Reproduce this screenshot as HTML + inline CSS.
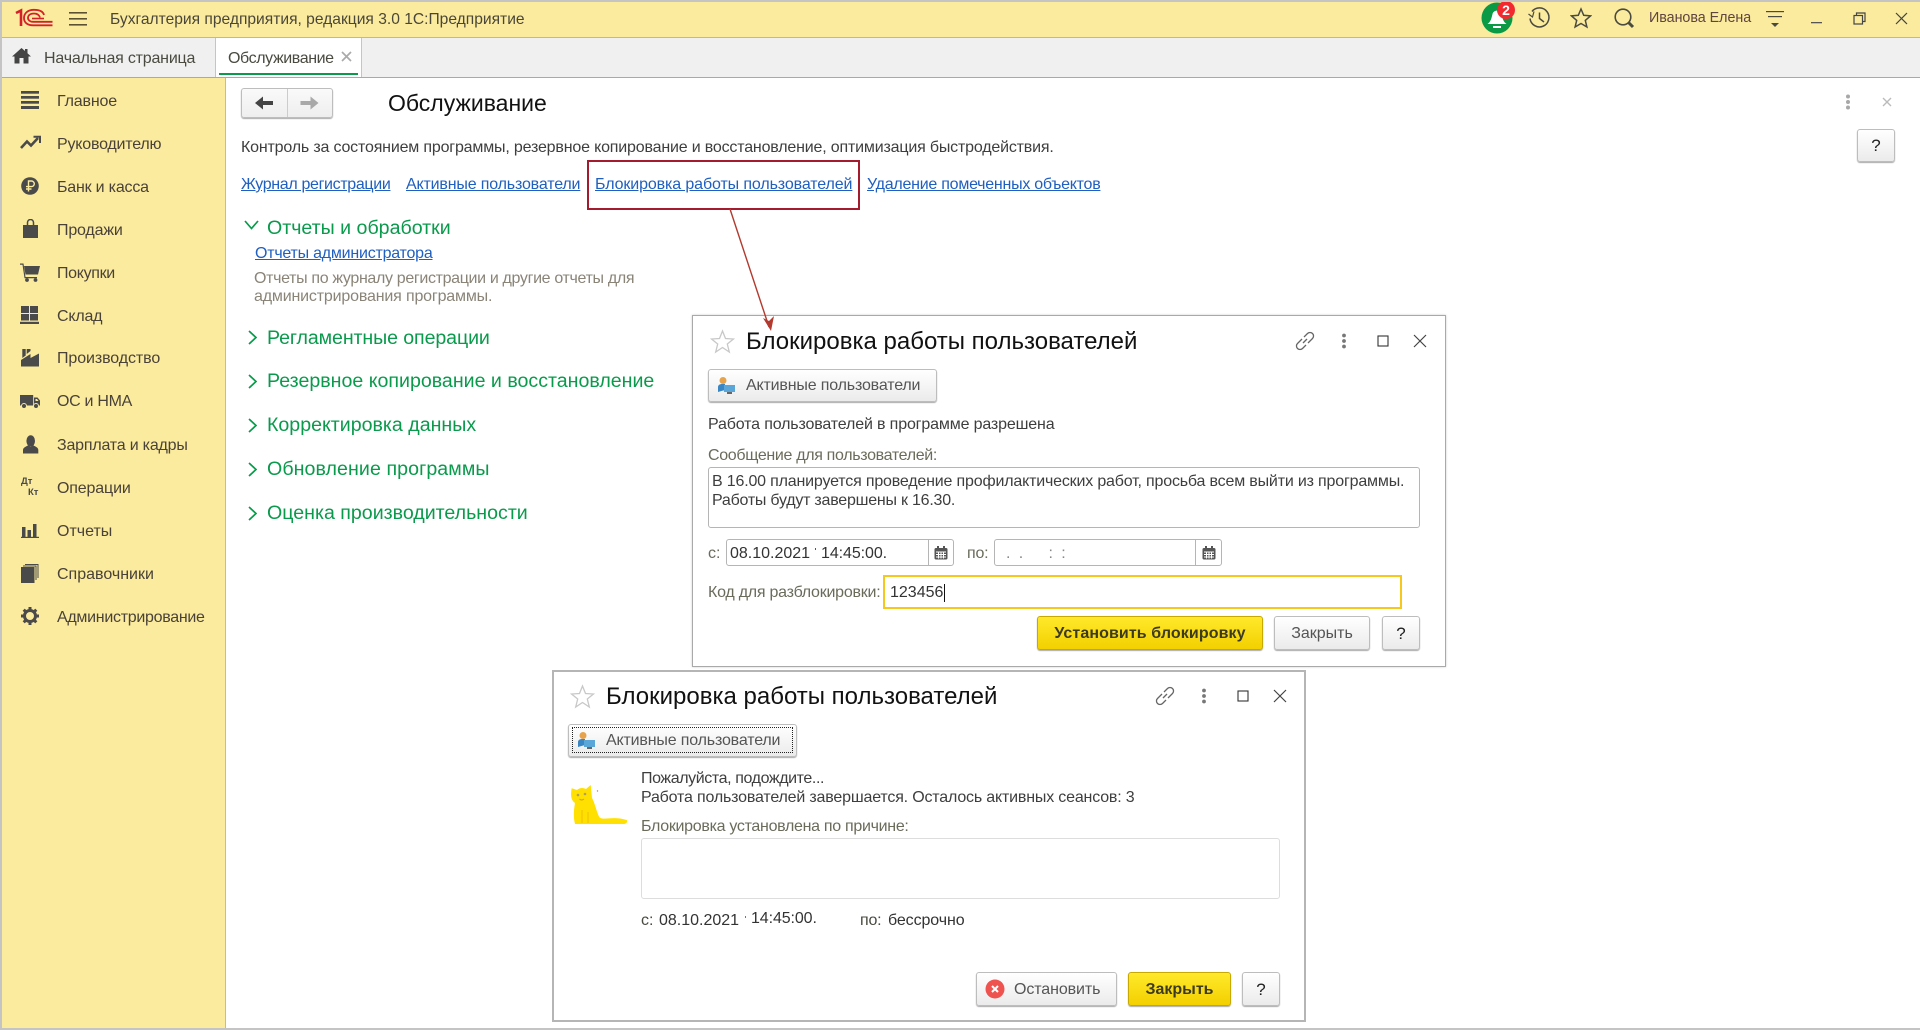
<!DOCTYPE html>
<html lang="ru"><head><meta charset="utf-8"><title>Обслуживание</title>
<style>
html,body{margin:0;padding:0;background:#fff}
#p{position:relative;width:1920px;height:1030px;overflow:hidden;background:#fff;font-family:"Liberation Sans",Arial,sans-serif;font-size:16px;color:#4a4a4a}
#p div,#p svg,#p a{position:absolute}
.t{white-space:nowrap;line-height:20px;height:20px}
.nav{left:57px;color:#4a4238}
.l{color:#1f5fc0;text-decoration:underline}
.g{color:#0a9a4c;font-size:19.600px;left:267px;line-height:24px;height:24px}
.b{background:linear-gradient(#fff,#ebebeb);border:1px solid #bdbdbd;border-radius:3px;box-shadow:0 1px 1px #aaa;box-sizing:border-box}
.y{background:linear-gradient(#ffe92b,#f3d000);border:1px solid #c8a900;border-radius:3px;box-shadow:0 1px 1px #aaa;box-sizing:border-box}
.f{background:#fff;border:1px solid #b5b5b5;border-radius:3px;box-sizing:border-box}
.dlg{background:#fff;box-sizing:border-box}
.h{font-size:24px;color:#111;line-height:30px;height:30px}
.c{text-align:center}
</style></head><body><div id="p">

<!-- outer frame -->
<div style="left:0;top:0;width:1920px;height:2px;background:#c4c4c4;z-index:9"></div>
<div style="left:0;top:0;width:2px;height:1030px;background:#c4c4c4;z-index:9"></div>
<div style="left:0;top:1028px;width:1920px;height:2px;background:#c4c4c4;z-index:9"></div>

<!-- header -->
<div style="left:0;top:0;width:1920px;height:37px;background:#fbeb9e;border-bottom:1px solid #c9bb72"></div>
<svg style="left:0;top:0" width="60" height="30" fill="none" stroke="#d3202a"><path d="M16 13 L21 10.500 V26" stroke-width="2.600"/><path d="M44 15 C43 11 39 9.800 34 9.800 C28 9.800 24 13 24 18 C24 23 28 25.300 33 25.300 H52.500" stroke-width="1.800"/><path d="M40 17.500 C39 14.500 37 13.500 34 13.500 C30 13.500 28 15.500 28 18 C28 20 30 21.800 33 21.800 H52.500" stroke-width="1.800"/><path d="M32 18.500 H44" stroke-width="1.600"/></svg>
<svg style="left:69px;top:12px" width="18" height="14" fill="#5a5232"><rect y="0" width="18" height="1.600"/><rect y="6" width="18" height="1.600"/><rect y="12" width="18" height="1.600"/></svg>
<div class="t" style="left:110px;top:10px;color:#4a4638;font-size:15.600px">Бухгалтерия предприятия, редакция 3.0 1С:Предприятие</div>

<svg style="left:1480px;top:0" width="40" height="36"><circle cx="17" cy="18" r="15.500" fill="#0a9a46"/><path d="M7.500 24 C11 21.500 11.500 18 12.500 14 C13.500 9.500 20.500 9.500 21.500 14 C22.500 18 23 21.500 26.500 24 Z" fill="#fff"/><rect x="13" y="26" width="8" height="2" fill="#fff"/><circle cx="26" cy="10" r="9" fill="#f22a30"/><text x="26" y="15" text-anchor="middle" font-family="Liberation Sans" font-weight="bold" font-size="14" fill="#fff">2</text></svg>
<svg style="left:1527px;top:6px" width="24" height="24" fill="none" stroke="#4a4a40" stroke-width="1.500"><path d="M5 5.500 A9.500 9.500 0 1 1 3 12.500"/><path d="M1.500 8 L5.500 11 L7 5.500" stroke-width="1.200"/><path d="M12.500 6.500 V12.500 L17 16"/></svg>
<svg style="left:1570px;top:7px" width="22" height="22" fill="none" stroke="#4a4a40" stroke-width="1.500"><path d="M11 2 L13.700 8.300 L20.500 8.900 L15.300 13.400 L16.900 20 L11 16.500 L5.100 20 L6.700 13.400 L1.500 8.900 L8.300 8.300 Z"/></svg>
<svg style="left:1613px;top:7px" width="22" height="22" fill="none" stroke="#4a4a40" stroke-width="1.600"><circle cx="10" cy="10" r="7.800"/><path d="M15.500 15.500 L20 20" stroke-width="3"/></svg>
<div class="t" style="left:1649px;top:8px;font-size:14.300px;color:#5f4440;letter-spacing:-.03px">Иванова Елена</div>
<svg style="left:1766px;top:11px" width="18" height="18" fill="#4a4a40"><rect y="0" width="18" height="1.200"/><rect x="2" y="5" width="14" height="1.200"/><path d="M5 12 H13 L9 16 Z"/></svg>
<svg style="left:1811px;top:21px" width="12" height="4"><rect y="1" width="11" height="1.300" fill="#555"/></svg>
<svg style="left:1853px;top:12px" width="13" height="13" fill="none" stroke="#444" stroke-width="1.200"><rect x="1" y="3.500" width="8.500" height="8.500"/><path d="M3.500 3.500 V1 H12 V9.500 H9.500"/></svg>
<svg style="left:1895px;top:12px" width="13" height="13" stroke="#444" stroke-width="1.200"><path d="M1 1 L12 12 M12 1 L1 12"/></svg>

<!-- tabs -->
<div style="left:2px;top:38px;width:1918px;height:39px;background:#f0f0f0"></div>
<div style="left:0;top:77px;width:1920px;height:1px;background:#a9a9a9"></div>
<svg style="left:12px;top:48px" width="19" height="16" fill="#444"><path d="M9.500 0 L13 3 V1 H15.500 V5.300 L19 8.500 H16.500 V15.500 H11.500 V10 H7.500 V15.500 H2.500 V8.500 H0 Z"/></svg>
<div class="t" style="left:44px;top:49px;color:#4a4a40;letter-spacing:-.2px">Начальная страница</div>
<div style="left:215px;top:38px;width:147px;height:39px;background:#fff;border-left:1px solid #c5c5c5;border-right:1px solid #c5c5c5;box-sizing:border-box"></div>
<div style="left:219px;top:73px;width:139px;height:2px;background:#0a9a4c"></div>
<div class="t" style="left:228px;top:49px;color:#4a4a40;letter-spacing:-.4px">Обслуживание</div>
<svg style="left:341px;top:51px" width="11" height="11" stroke="#aaa" stroke-width="1.700"><path d="M1 1 L10 10 M10 1 L1 10"/></svg>

<!-- sidebar -->
<div style="left:2px;top:78px;width:224px;height:950px;background:#fbeb9e;border-right:1px solid #c9bf80;box-sizing:border-box"></div>
<svg style="left:21px;top:91px" width="18" height="18" fill="#4a4a4a"><rect width="18" height="2.700"/><rect y="5" width="18" height="2.700"/><rect y="10" width="18" height="2.700"/><rect y="15" width="18" height="3"/></svg>
<div class="t nav" style="top:92px;letter-spacing:-.17px">Главное</div>
<svg style="left:20px;top:135px" width="21" height="14" fill="none" stroke="#4a4a4a" stroke-width="2.600"><path d="M1 13 L7 6.500 L11 10.500 L18 3"/><path d="M13.500 1.800 H20 V8" stroke-width="2"/></svg>
<div class="t nav" style="top:135px;letter-spacing:-.2px">Руководителю</div>
<svg style="left:21px;top:177px" width="18" height="18"><circle cx="9" cy="9" r="8.800" fill="#4a4a4a"/><path d="M7.500 14.500 V4 H10.500 A2.800 2.800 0 0 1 10.500 9.600 H5 M5 12 H10.500" fill="none" stroke="#fbeb9e" stroke-width="1.400"/></svg>
<div class="t nav" style="top:178px;letter-spacing:-.2px">Банк и касса</div>
<svg style="left:22px;top:219px" width="17" height="20" fill="#4a4a4a"><path d="M1 6 H16 V19 H1 Z"/><path d="M5.500 9 V3.500 A3 3 0 0 1 11.500 3.500 V9" fill="none" stroke="#4a4a4a" stroke-width="1.500"/></svg>
<div class="t nav" style="top:221px;letter-spacing:-.17px">Продажи</div>
<svg style="left:20px;top:263px" width="21" height="19" fill="#4a4a4a"><path d="M0 0.500 H3.500 L5.500 14 H17 V15.200 H4.500 L2.500 1.700 H0 Z"/><path d="M4 3 H20 L18 11.500 H5.500 Z"/><circle cx="7" cy="17" r="1.900"/><circle cx="15.500" cy="17" r="1.900"/></svg>
<div class="t nav" style="top:264px;letter-spacing:-.33px">Покупки</div>
<svg style="left:20px;top:306px" width="19" height="18" fill="#4a4a4a"><rect x="1" width="8" height="7"/><rect x="10" width="8" height="7"/><rect x="1" y="8" width="8" height="6.500"/><rect x="10" y="8" width="8" height="6.500"/><rect y="15.800" width="19" height="2.200"/></svg>
<div class="t nav" style="top:307px;letter-spacing:-.2px">Склад</div>
<svg style="left:21px;top:349px" width="18" height="18" fill="#4a4a4a"><path d="M0 17.500 V11 L9.500 5 V9 L18 4.500 V17.500 Z"/><path d="M1.300 0 H4.700 V6.500 L1.300 9 Z"/><path d="M5.700 0 H9.500 V2 L5.700 5 Z"/></svg>
<div class="t nav" style="top:349px;letter-spacing:-.1px">Производство</div>
<svg style="left:20px;top:395px" width="21" height="14" fill="#4a4a4a"><rect y="0" width="13.200" height="10.500"/><path d="M14 2.500 H17.500 L20 5.500 V10.500 H14 Z"/><path d="M15.500 4 H17 L18.500 6 H15.500 Z" fill="#fbeb9e"/><circle cx="4" cy="11" r="2.500" stroke="#fbeb9e" stroke-width="1"/><circle cx="16" cy="11" r="2.500" stroke="#fbeb9e" stroke-width="1"/></svg>
<div class="t nav" style="top:392px;letter-spacing:-.3px">ОС и НМА</div>
<svg style="left:23px;top:435px" width="16" height="19" fill="#4a4a4a"><ellipse cx="7.700" cy="6" rx="4.300" ry="5.800"/><path d="M0 18.500 V15 C0 12.500 3 11.500 5 10.500 L7.700 12 L10.500 10.500 C12.500 11.500 15.300 12.500 15.300 15 V18.500 Z"/></svg>
<div class="t nav" style="top:436px;letter-spacing:-.2px">Зарплата и кадры</div>
<div style="left:21px;top:477px;font-size:9.500px;font-weight:bold;color:#4a4a4a;line-height:10px">Дт</div>
<div style="left:28px;top:488px;font-size:9.500px;font-weight:bold;color:#4a4a4a;line-height:10px">Кт</div>
<div class="t nav" style="top:479px;letter-spacing:-.15px">Операции</div>
<svg style="left:21px;top:524px" width="18" height="14" fill="#4a4a4a"><rect x="1" y="3" width="3.500" height="10"/><rect x="6.500" y="6" width="3.500" height="7"/><rect x="12" y="0" width="3.500" height="13"/><rect y="12.800" width="18" height="1.200"/></svg>
<div class="t nav" style="top:522px">Отчеты</div>
<svg style="left:21px;top:564px" width="18" height="19" fill="#4a4a4a"><rect x="0" y="3" width="13.500" height="16"/><path d="M2 2 H15 V16" fill="none" stroke="#4a4a4a" stroke-width="1"/><path d="M4 0.500 H17 V14" fill="none" stroke="#4a4a4a" stroke-width="1"/></svg>
<div class="t nav" style="top:565px">Справочники</div>
<svg style="left:21px;top:607px" width="18" height="18"><circle cx="9" cy="9" r="5.500" fill="none" stroke="#4a4a4a" stroke-width="3"/><g stroke="#4a4a4a" stroke-width="3"><path d="M9 0 V3.500 M9 14.500 V18 M0 9 H3.500 M14.500 9 H18 M2.700 2.700 L5 5 M13 13 L15.300 15.300 M15.300 2.700 L13 5 M5 13 L2.700 15.300"/></g></svg>
<div class="t nav" style="top:608px;letter-spacing:-.29px">Администрирование</div>

<!-- page -->
<div class="b" style="left:241px;top:88px;width:92px;height:30px;background:linear-gradient(#fafafa,#eee)"></div>
<div style="left:287px;top:89px;width:1px;height:28px;background:#ccc"></div>
<svg style="left:255px;top:96px" width="19" height="14" fill="#444"><path d="M0 7 L8 0.500 V5 H18 V9 H8 V13.500 Z"/></svg>
<svg style="left:300px;top:96px" width="19" height="14" fill="#a9a9a9"><path d="M18.500 7 L10.500 0.500 V5 H0.500 V9 H10.500 V13.500 Z"/></svg>
<div class="t h" style="left:388px;top:88px;font-size:23px">Обслуживание</div>
<svg style="left:1845px;top:94px" width="6" height="16" fill="#a8a8a8"><circle cx="3" cy="2.500" r="2"/><circle cx="3" cy="8" r="2"/><circle cx="3" cy="13.500" r="2"/></svg>
<svg style="left:1882px;top:97px" width="10" height="10" stroke="#bbb" stroke-width="1.400"><path d="M1 1 L9 9 M9 1 L1 9"/></svg>
<div class="b c" style="left:1857px;top:129px;width:38px;height:33px;line-height:31px;font-size:17px;color:#222">?</div>

<div class="t" style="left:241px;top:138px;color:#3e3e3e;letter-spacing:-.18px">Контроль за состоянием программы, резервное копирование и восстановление, оптимизация быстродействия.</div>
<div class="t l" style="left:241px;top:175px;letter-spacing:-.34px">Журнал регистрации</div>
<div class="t l" style="left:406px;top:175px;letter-spacing:-.17px">Активные пользователи</div>
<div class="t l" style="left:595px;top:175px;letter-spacing:-.115px">Блокировка работы пользователей</div>
<div class="t l" style="left:867px;top:175px;letter-spacing:-.25px">Удаление помеченных объектов</div>
<div style="left:587px;top:160px;width:273px;height:50px;border:2px solid #a31b2c;box-sizing:border-box"></div>

<svg style="left:243px;top:219px" width="17" height="12" fill="none" stroke="#0a9a4c" stroke-width="1.700"><path d="M2 2 L8.500 9.500 L15 2"/></svg>
<div class="t g" style="top:216px">Отчеты и обработки</div>
<div class="t l" style="left:255px;top:244px;letter-spacing:-.23px">Отчеты администратора</div>
<div class="t" style="left:254px;top:269px;color:#8a8478;letter-spacing:-.34px">Отчеты по журналу регистрации и другие отчеты для</div>
<div class="t" style="left:254px;top:287px;color:#8a8478;letter-spacing:-.17px">администрирования программы.</div>

<svg style="left:247px;top:329px" width="11" height="17" fill="none" stroke="#0a9a4c" stroke-width="1.700"><path d="M2 2 L9 8.500 L2 15"/></svg>
<div class="t g" style="top:326px;letter-spacing:-.1px">Регламентные операции</div>
<svg style="left:247px;top:373px" width="11" height="17" fill="none" stroke="#0a9a4c" stroke-width="1.700"><path d="M2 2 L9 8.500 L2 15"/></svg>
<div class="t g" style="top:369px">Резервное копирование и восстановление</div>
<svg style="left:247px;top:417px" width="11" height="17" fill="none" stroke="#0a9a4c" stroke-width="1.700"><path d="M2 2 L9 8.500 L2 15"/></svg>
<div class="t g" style="top:413px">Корректировка данных</div>
<svg style="left:247px;top:461px" width="11" height="17" fill="none" stroke="#0a9a4c" stroke-width="1.700"><path d="M2 2 L9 8.500 L2 15"/></svg>
<div class="t g" style="top:457px;letter-spacing:.08px">Обновление программы</div>
<svg style="left:247px;top:505px" width="11" height="17" fill="none" stroke="#0a9a4c" stroke-width="1.700"><path d="M2 2 L9 8.500 L2 15"/></svg>
<div class="t g" style="top:501px">Оценка производительности</div>

<!-- dialog 1 -->
<div class="dlg" style="left:692px;top:315px;width:754px;height:352px;border:1px solid #a9a9a9;box-shadow:0 0 2px #ccc"></div>
<svg style="left:710px;top:329px" width="25" height="25" fill="none" stroke="#c8c8c8" stroke-width="1.300"><path d="M12.500 2 L15.500 9.500 L23.500 10 L17.300 15 L19.300 23 L12.500 18.500 L5.700 23 L7.700 15 L1.500 10 L9.500 9.500 Z"/></svg>
<div class="t h" style="left:746px;top:327px">Блокировка работы пользователей</div>
<svg style="left:1294px;top:330px" width="22" height="22" fill="none" stroke="#666" stroke-width="1.300"><path d="M9 13 L13 9"/><path d="M8 9 L3.500 13.500 A3.500 3.500 0 0 0 8.500 18.500 L12 15"/><path d="M10 7 L13.500 3.500 A3.500 3.500 0 0 1 18.500 8.500 L14 13"/></svg>
<svg style="left:1341px;top:333px" width="6" height="16" fill="#777"><circle cx="3" cy="2.500" r="1.900"/><circle cx="3" cy="8" r="1.900"/><circle cx="3" cy="13.500" r="1.900"/></svg>
<svg style="left:1377px;top:335px" width="12" height="12" fill="none" stroke="#333" stroke-width="1.100"><rect x="1" y="1" width="10" height="10"/></svg>
<svg style="left:1413px;top:334px" width="14" height="14" stroke="#444" stroke-width="1.200"><path d="M1 1 L13 13 M13 1 L1 13"/></svg>

<div class="b" style="left:708px;top:369px;width:229px;height:33px"></div>
<svg style="left:717px;top:376px" width="20" height="20"><circle cx="6" cy="4.500" r="3.500" fill="#e7a34c"/><path d="M1 16 V11 C1 9 3 8 5 8 H8 V14 Z" fill="#3a86c4"/><rect x="7" y="9" width="11" height="7" fill="#5ba6d8"/><rect x="10" y="16" width="5" height="2" fill="#666"/></svg>
<div class="t" style="left:746px;top:376px;color:#555;letter-spacing:-.17px">Активные пользователи</div>
<div class="t" style="left:708px;top:415px;color:#3e3e3e;letter-spacing:-.15px">Работа пользователей в программе разрешена</div>
<div class="t" style="left:708px;top:446px;color:#6b6b5c;letter-spacing:-.33px">Сообщение для пользователей:</div>
<div class="f" style="left:708px;top:467px;width:712px;height:61px"></div>
<div class="t" style="left:712px;top:472px;color:#3e3e3e;letter-spacing:-.18px">В 16.00 планируется проведение профилактических работ, просьба всем выйти из программы.</div>
<div class="t" style="left:712px;top:491px;color:#3e3e3e;letter-spacing:-.23px">Работы будут завершены к 16.30.</div>

<div class="t" style="left:708px;top:544px;color:#6b6b5c">с:</div>
<div class="f" style="left:726px;top:539px;width:228px;height:27px"></div>
<div style="left:928px;top:540px;width:1px;height:25px;background:#b5b5b5"></div>
<div class="t" style="left:730px;top:544px;color:#333">08.10.2021</div>
<div style="left:815px;top:548px;width:1px;height:2px;background:#555"></div>
<div class="t" style="left:821px;top:544px;color:#333;letter-spacing:-.08px">14:45:00.</div>
<svg style="left:934px;top:546px" width="14" height="14"><rect x="0.500" y="2" width="13" height="11.500" rx="1.500" fill="#555"/><rect x="3" y="0" width="2" height="3" fill="#555"/><rect x="9" y="0" width="2" height="3" fill="#555"/><path d="M2 6 H12 M2 8.500 H12 M2 11 H12 M4.500 5.500 V12.500 M7 5.500 V12.500 M9.500 5.500 V12.500" stroke="#fff" stroke-width="1"/></svg>
<div class="t" style="left:967px;top:544px;color:#6b6b5c;letter-spacing:-.2px">по:</div>
<div class="f" style="left:994px;top:539px;width:228px;height:27px"></div>
<div style="left:1195px;top:540px;width:1px;height:25px;background:#b5b5b5"></div>
<div class="t" style="left:1006px;top:544px;color:#888;letter-spacing:-.2px">.&nbsp;&nbsp;.&nbsp;&nbsp;&nbsp;&nbsp;&nbsp;&nbsp;:&nbsp;&nbsp;:</div>
<svg style="left:1202px;top:546px" width="14" height="14"><rect x="0.500" y="2" width="13" height="11.500" rx="1.500" fill="#555"/><rect x="3" y="0" width="2" height="3" fill="#555"/><rect x="9" y="0" width="2" height="3" fill="#555"/><path d="M2 6 H12 M2 8.500 H12 M2 11 H12 M4.500 5.500 V12.500 M7 5.500 V12.500 M9.500 5.500 V12.500" stroke="#fff" stroke-width="1"/></svg>

<div class="t" style="left:708px;top:583px;color:#6b6b5c;letter-spacing:-.24px">Код для разблокировки:</div>
<div style="left:883px;top:575px;width:519px;height:34px;border:2px solid #f6c81e;box-sizing:border-box;background:#fff"></div>
<div class="t" style="left:890px;top:583px;color:#333">123456</div>
<div style="left:944px;top:584px;width:1px;height:18px;background:#111"></div>
<div class="y c t" style="left:1037px;top:616px;width:226px;height:34px;line-height:34px;font-weight:bold;color:#3c3a20;letter-spacing:.1px">Установить блокировку</div>
<div class="b c t" style="left:1274px;top:616px;width:96px;height:34px;line-height:34px;color:#555">Закрыть</div>
<div class="b c t" style="left:1382px;top:616px;width:38px;height:34px;line-height:34px;font-size:17px;color:#222">?</div>

<!-- arrow -->
<svg style="left:725px;top:205px;z-index:5" width="60" height="130"><path d="M5 4 L44 122" stroke="#b23a2e" stroke-width="1.400"/><path d="M46 126 L38 113 L44 116 L49 111 Z" fill="#b23a2e"/></svg>

<!-- dialog 2 -->
<div class="dlg" style="left:552px;top:670px;width:754px;height:352px;border:2px solid #b5b5b5"></div>
<svg style="left:570px;top:684px" width="25" height="25" fill="none" stroke="#c8c8c8" stroke-width="1.300"><path d="M12.500 2 L15.500 9.500 L23.500 10 L17.300 15 L19.300 23 L12.500 18.500 L5.700 23 L7.700 15 L1.500 10 L9.500 9.500 Z"/></svg>
<div class="t h" style="left:606px;top:682px">Блокировка работы пользователей</div>
<svg style="left:1154px;top:685px" width="22" height="22" fill="none" stroke="#666" stroke-width="1.300"><path d="M9 13 L13 9"/><path d="M8 9 L3.500 13.500 A3.500 3.500 0 0 0 8.500 18.500 L12 15"/><path d="M10 7 L13.500 3.500 A3.500 3.500 0 0 1 18.500 8.500 L14 13"/></svg>
<svg style="left:1201px;top:688px" width="6" height="16" fill="#777"><circle cx="3" cy="2.500" r="1.900"/><circle cx="3" cy="8" r="1.900"/><circle cx="3" cy="13.500" r="1.900"/></svg>
<svg style="left:1237px;top:690px" width="12" height="12" fill="none" stroke="#333" stroke-width="1.100"><rect x="1" y="1" width="10" height="10"/></svg>
<svg style="left:1273px;top:689px" width="14" height="14" stroke="#444" stroke-width="1.200"><path d="M1 1 L13 13 M13 1 L1 13"/></svg>

<div class="b" style="left:568px;top:724px;width:229px;height:33px"></div>
<div style="left:572px;top:727px;width:221px;height:26px;border:1px dotted #222;box-sizing:border-box"></div>
<svg style="left:577px;top:731px" width="20" height="20"><circle cx="6" cy="4.500" r="3.500" fill="#e7a34c"/><path d="M1 16 V11 C1 9 3 8 5 8 H8 V14 Z" fill="#3a86c4"/><rect x="7" y="9" width="11" height="7" fill="#5ba6d8"/><rect x="10" y="16" width="5" height="2" fill="#666"/></svg>
<div class="t" style="left:606px;top:731px;color:#555;letter-spacing:-.17px">Активные пользователи</div>

<svg style="left:570px;top:784px" width="60" height="42"><path d="M1.700 4.300 L7 6 Q11 2.500 16 5 L20.700 1 L22 14 C25 19 27 30 30 34 C36 36 44 32 56.700 36 C58 38 56 40 54 40 L5 40 C3 32 4 25 5 19 C2 17 0 13 1.700 4.300 Z" fill="#ffe000"/><circle cx="8" cy="11" r="1.300" fill="#b0a060"/><circle cx="15" cy="10" r="1.300" fill="#b0a060"/><path d="M9.500 15 Q11.500 17 14 15" fill="none" stroke="#d8a000" stroke-width="1"/><path d="M12 26 V39 M18 28 V39" stroke="#f0c000" stroke-width="1"/><circle cx="27.500" cy="7" r=".7" fill="#c08060"/></svg>

<div class="t" style="left:641px;top:769px;color:#3e3e3e;letter-spacing:-.4px">Пожалуйста, подождите...</div>
<div class="t" style="left:641px;top:788px;color:#3e3e3e;letter-spacing:-.18px">Работа пользователей завершается. Осталось активных сеансов: 3</div>
<div class="t" style="left:641px;top:817px;color:#6b6b5c;letter-spacing:-.3px">Блокировка установлена по причине:</div>
<div style="left:641px;top:838px;width:639px;height:61px;border:1px solid #ddd;border-radius:3px;box-sizing:border-box"></div>
<div class="t" style="left:641px;top:911px;color:#4a4a40">с:</div>
<div class="t" style="left:659px;top:911px;color:#333">08.10.2021</div>
<div style="left:745px;top:916px;width:1px;height:2px;background:#777"></div>
<div class="t" style="left:751px;top:909px;color:#333;letter-spacing:-.1px">14:45:00.</div>
<div class="t" style="left:860px;top:911px;color:#4a4a40;letter-spacing:-.2px">по:</div>
<div class="t" style="left:888px;top:911px;color:#333;letter-spacing:-.1px">бессрочно</div>

<div class="b" style="left:976px;top:972px;width:141px;height:34px"></div>
<svg style="left:985px;top:979px" width="20" height="20"><circle cx="10" cy="10" r="9.500" fill="#ef5350"/><path d="M7 7 L13 13 M13 7 L7 13" stroke="#fff" stroke-width="2"/></svg>
<div class="t" style="left:1014px;top:980px;color:#555;letter-spacing:-.1px">Остановить</div>
<div class="y c t" style="left:1128px;top:972px;width:103px;height:34px;line-height:34px;font-weight:bold;color:#3c3a20">Закрыть</div>
<div class="b c t" style="left:1242px;top:972px;width:38px;height:34px;line-height:34px;font-size:17px;color:#222">?</div>

</div></body></html>
